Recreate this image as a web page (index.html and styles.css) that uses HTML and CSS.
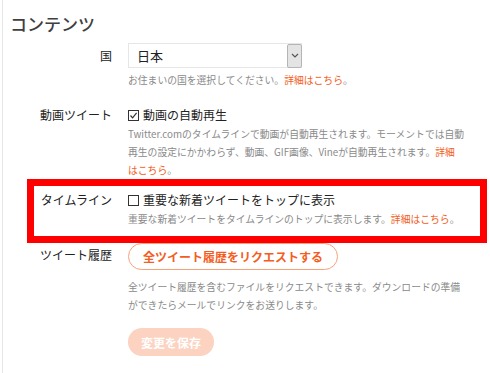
FILE: index.html
```html
<!DOCTYPE html>
<html lang="ja">
<head>
<meta charset="utf-8">
<link rel="stylesheet" href="styles.css">
</head>
<body>
<div class="page">
  <h1 class="title">コンテンツ</h1>

  <div class="row row-country">
    <div class="label label-select">国</div>
    <div class="field">
      <div class="select">
        <span class="select-value">日本</span>
        <span class="select-arrow">
          <svg width="8" height="5" viewBox="0 0 8 5"><path d="M1 1 L4 4 L7 1" fill="none" stroke="#555" stroke-width="1.2"/></svg>
        </span>
      </div>
      <p class="help help-after-select">お住まいの国を選択してください。<a class="link">詳細はこちら</a>。</p>
    </div>
  </div>

  <div class="row row-video">
    <div class="label">動画ツイート</div>
    <div class="field">
      <div class="check">
        <span class="box">
          <svg width="9" height="9" viewBox="0 0 9 9"><path d="M1.5 4.5 L3.6 6.8 L7.6 1.8" fill="none" stroke="#333" stroke-width="1.2"/></svg>
        </span>
        <span>動画の自動再生</span>
      </div>
      <p class="help">Twitter.comのタイムラインで動画が自動再生されます。モーメントでは自動<br>再生の設定にかかわらず、動画、GIF画像、Vineが自動再生されます。<a class="link">詳細</a><br><a class="link">はこちら</a>。</p>
    </div>
  </div>

  <div class="row row-timeline highlight">
    <div class="label">タイムライン</div>
    <div class="field">
      <div class="check">
        <span class="box"></span>
        <span>重要な新着ツイートをトップに表示</span>
      </div>
      <p class="help">重要な新着ツイートをタイムラインのトップに表示します。<a class="link">詳細はこちら</a>。</p>
    </div>
  </div>

  <div class="row row-history">
    <div class="label label-button">ツイート履歴</div>
    <div class="field">
      <button class="btn-outline">全ツイート履歴をリクエストする</button>
      <p class="help help-after-button">全ツイート履歴を含むファイルをリクエストできます。ダウンロードの準備<br>ができたらメールでリンクをお送りします。</p>
    </div>
  </div>

  <div class="row row-save">
    <div class="label"></div>
    <div class="field">
      <button class="btn-save">変更を保存</button>
    </div>
  </div>
</div>
</body>
</html>
```

FILE: styles.css
```css
* { box-sizing: border-box; }
html, body {
  margin: 0;
  padding: 0;
  background: #ffffff;
}
body {
  font-family: "Noto Sans CJK JP", "Noto Sans", "Liberation Sans", sans-serif;
  color: #333333;
  padding-left: 2px;
}
.page {
  border-left: 1px solid #e6e6e6;
  min-height: 373px;
  padding-top: 13px;
}
.title {
  margin: 0 0 0 7px;
  font-size: 17px;
  line-height: 22px;
  font-weight: 500;
  color: #3f3f3f;
}
.row {
  display: flex;
  align-items: flex-start;
}
.label {
  width: 125px;
  flex: none;
  padding-right: 16px;
  text-align: right;
  font-size: 12px;
  line-height: 18px;
  color: #222222;
}
.label-select { line-height: 25px; }
.label-button { line-height: 24px; }
.field {
  width: 342px;
  flex: none;
}
.row-country { margin-top: 8px; }
.row-video { margin-top: 17px; }
.row-timeline { margin-top: 12px; }
.row-history { margin-top: 15px; }
.row-save { margin-top: 14px; }

.select {
  width: 174px;
  height: 25px;
  border: 1px solid #e6e6e6;
  display: flex;
  align-items: center;
  justify-content: space-between;
  padding-left: 8px;
}
.select-value {
  font-size: 13px;
  color: #222222;
}
.select-arrow {
  width: 15px;
  height: 24px;
  margin-right: -1px;
  background: #e4e4e4;
  border: 1px solid #b5b5b5;
  border-radius: 2px;
  display: flex;
  align-items: center;
  justify-content: center;
}
.select-arrow svg { display: block; }

.help {
  margin: 1px 0 0 0;
  font-size: 9.8px;
  line-height: 18px;
  color: #8a8a8a;
  white-space: nowrap;
}
.help-after-select { margin-top: 3px; }
.help-after-button { margin-top: 8px; }
.link {
  color: #f45d22;
  text-decoration: none;
}

.check {
  display: flex;
  align-items: center;
  font-size: 12px;
  line-height: 18px;
  color: #222222;
}
.box {
  width: 11px;
  height: 11px;
  border: 1px solid #333333;
  margin-right: 4px;
  display: flex;
  align-items: center;
  justify-content: center;
  flex: none;
}
.box svg { display: block; }

.highlight { position: relative; }
.highlight::after {
  content: "";
  position: absolute;
  left: 24px;
  top: -12px;
  width: 446px;
  bottom: -15px;
  border: 7px solid #ff0000;
  pointer-events: none;
}

.btn-outline {
  height: 27px;
  padding: 0 14px;
  border: 1px solid #f8a179;
  border-radius: 14px;
  background: #ffffff;
  color: #f45d22;
  font-family: inherit;
  font-size: 12px;
  font-weight: 700;
  line-height: 25px;
  margin: 0;
}
.btn-save {
  height: 28px;
  width: 86px;
  padding: 0;
  border: none;
  border-radius: 14px;
  background: #fcd2c0;
  color: #ffffff;
  font-family: inherit;
  font-size: 12px;
  font-weight: 700;
  margin: 0;
}
```
